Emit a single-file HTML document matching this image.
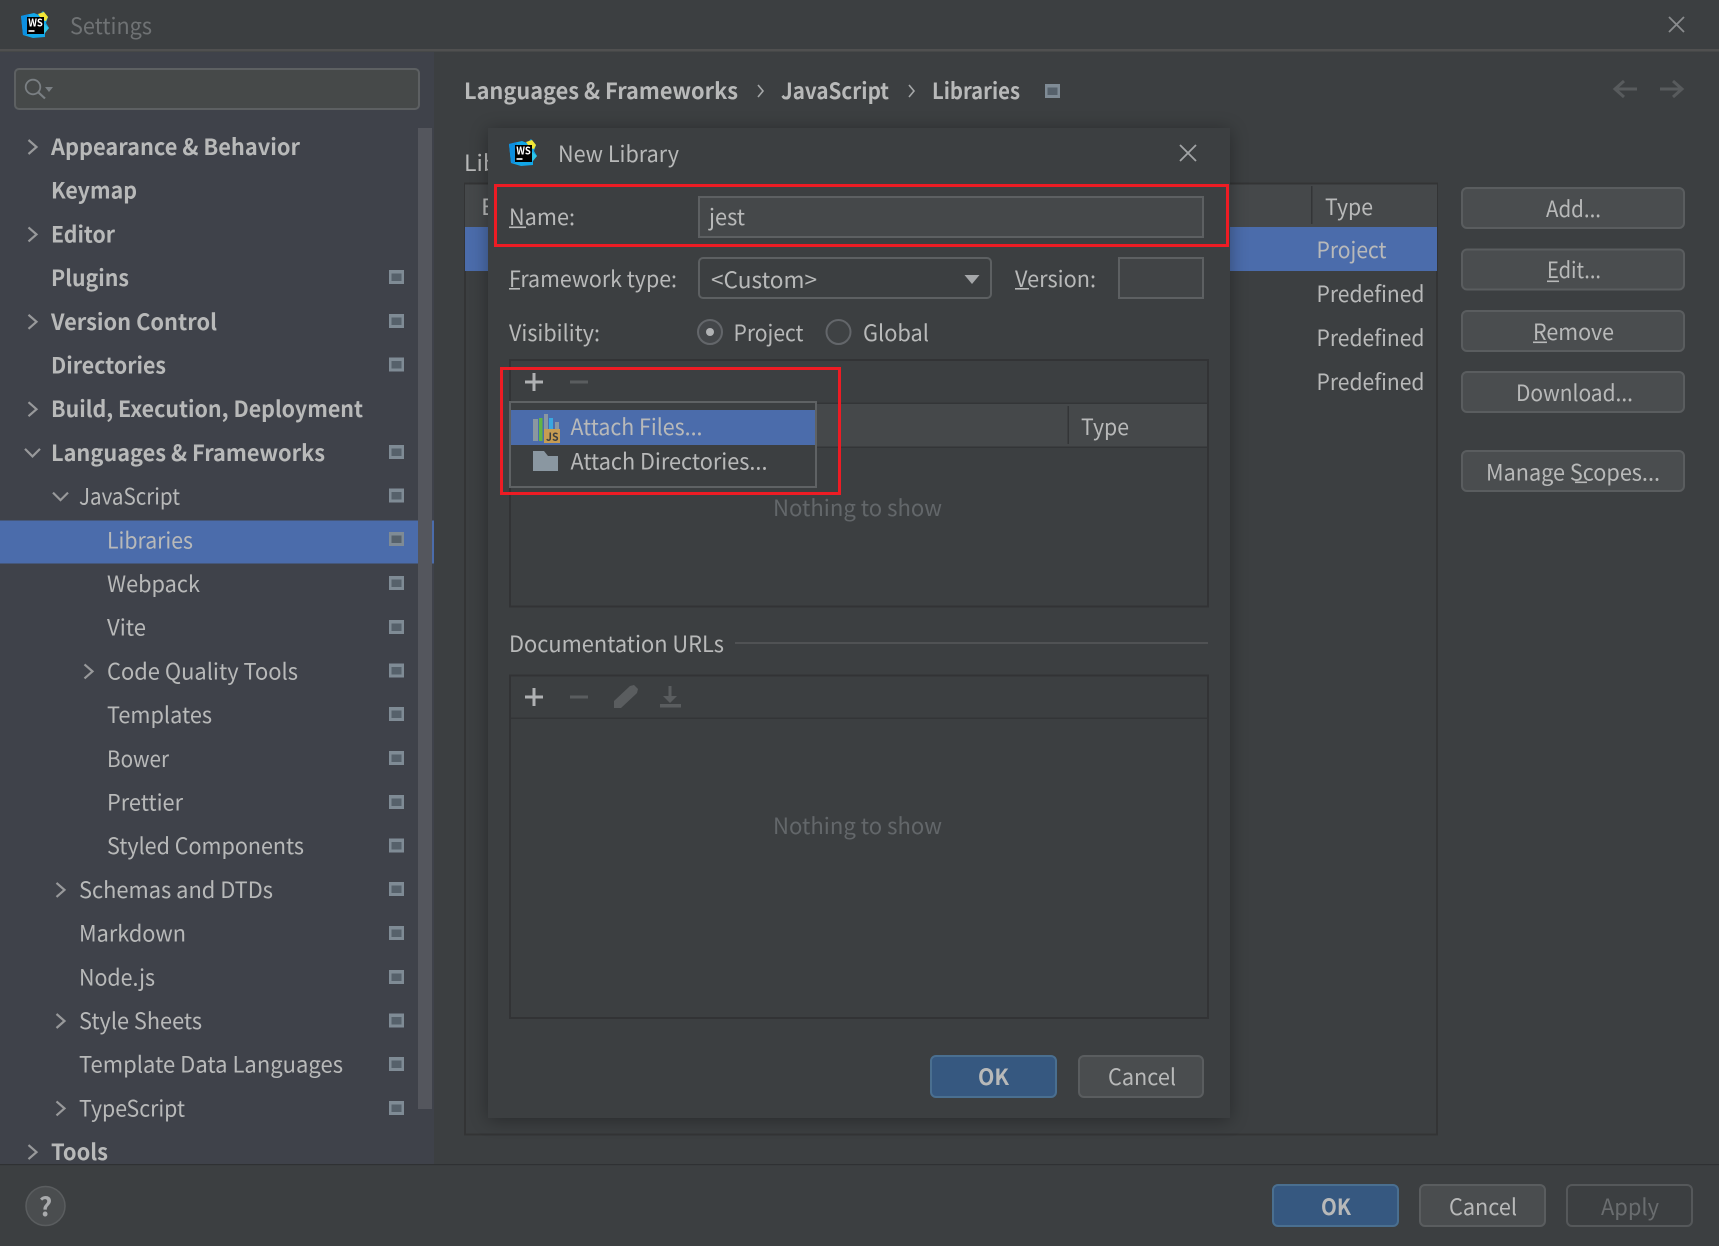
<!DOCTYPE html>
<html lang="en">
<head>
<meta charset="utf-8">
<title>Settings</title>
<style>
html,body{margin:0;padding:0;background:#3c3f41;width:1719px;height:1246px;overflow:hidden}
svg{display:block}
text{font-family:"Noto Sans CJK SC","Liberation Sans",sans-serif;font-size:22.5px;fill:#b8b9b9;white-space:pre;transform:translateY(1px)}
.b{font-weight:700}
.dim{fill:#63676a}
.title{fill:#6f7274}
</style>
</head>
<body>
<svg width="1719" height="1246" viewBox="0 0 1719 1246" xmlns="http://www.w3.org/2000/svg">
<defs>
<filter id="sh" x="-10%" y="-10%" width="120%" height="120%"><feGaussianBlur stdDeviation="9"/></filter>
<g id="ic"><rect x="0" y="0" width="15" height="14" fill="#7f8b95"/><rect x="2.5" y="3.5" width="10" height="7.5" fill="#56616b"/></g>
<polyline id="ar" points="0,-7 8,0 0,7" fill="none" stroke="#98999b" stroke-width="2.2"/>
<polyline id="dn" points="-7.5,-4 0,3.5 7.5,-4" fill="none" stroke="#98999b" stroke-width="2.2"/>
<g id="logo">
<polygon points="0,5 13,2 18,4 22,0 27,6 25,12 28,17 24,21 24,26 12,27 2,24" fill="#12a7e8"/>
<polygon points="0,5 8,3 6,24 2,24" fill="#0d8fe0"/>
<polygon points="17,3 23,1 27,6 25,10 21,9" fill="#f2e635"/>
<polygon points="22,12 28,17 24,22 22,20" fill="#2fc6e8"/>
<rect x="6" y="6" width="17" height="17" fill="#000"/>
<text x="7.2" y="14.4" textLength="14.6" lengthAdjust="spacingAndGlyphs" style="font-size:10.5px;font-weight:700;fill:#fff">WS</text>
<rect x="7.5" y="19.2" width="6" height="1.6" fill="#fff"/>
</g>
</defs>

<!-- base -->
<rect width="1719" height="1246" fill="#3c3f41"/>
<rect x="0" y="49" width="1719" height="2.5" fill="#505050"/>
<rect x="0" y="52" width="434" height="1112" fill="#3f424a"/>
<rect x="0" y="1164" width="1719" height="1.2" fill="#2f3133"/>

<!-- title bar -->
<use href="#logo" x="21" y="11"/>
<text class="title" x="70" y="33" textLength="82" lengthAdjust="spacingAndGlyphs">Settings</text>
<path d="M1669 17L1684 32M1684 17L1669 32" stroke="#8a8c8e" stroke-width="1.8" fill="none"/>

<!-- search -->
<rect x="15" y="69" width="404" height="40" rx="4" fill="#464949" stroke="#5d6062" stroke-width="2"/>
<circle cx="33" cy="87" r="7.3" fill="none" stroke="#7a7f83" stroke-width="1.8"/>
<path d="M38.5 92.5L45 98.5" stroke="#7a7f83" stroke-width="2.2"/>
<polygon points="45,87 53,87 49,92" fill="#7a7f83"/>

<!-- sidebar selection & scrollbar -->
<rect x="0" y="520.5" width="434" height="43" fill="#4b6cab"/>
<rect x="418" y="128" width="14" height="981" fill="#54565d"/>

<!-- tree -->
<g>
<use href="#ar" x="28.5" y="147"/><text class="b" x="51" y="154" textLength="249" lengthAdjust="spacingAndGlyphs">Appearance &amp; Behavior</text>
<text class="b" x="51" y="197.7" textLength="86" lengthAdjust="spacingAndGlyphs">Keymap</text>
<use href="#ar" x="28.5" y="234.4"/><text class="b" x="51" y="241.4" textLength="64" lengthAdjust="spacingAndGlyphs">Editor</text>
<text class="b" x="51" y="285.1" textLength="78" lengthAdjust="spacingAndGlyphs">Plugins</text>
<use href="#ar" x="28.5" y="321.8"/><text class="b" x="51" y="328.8" textLength="166" lengthAdjust="spacingAndGlyphs">Version Control</text>
<text class="b" x="51" y="372.5" textLength="115" lengthAdjust="spacingAndGlyphs">Directories</text>
<use href="#ar" x="28.5" y="409.2"/><text class="b" x="51" y="416.2" textLength="312" lengthAdjust="spacingAndGlyphs">Build, Execution, Deployment</text>
<use href="#dn" x="32.5" y="452.9"/><text class="b" x="51" y="459.9" textLength="274" lengthAdjust="spacingAndGlyphs">Languages &amp; Frameworks</text>
<use href="#dn" x="60.5" y="496.6"/><text x="79" y="503.6" textLength="101" lengthAdjust="spacingAndGlyphs">JavaScript</text>
<text x="107" y="547.3" textLength="86" lengthAdjust="spacingAndGlyphs">Libraries</text>
<text x="107" y="591" textLength="93" lengthAdjust="spacingAndGlyphs">Webpack</text>
<text x="107" y="634.7" textLength="39" lengthAdjust="spacingAndGlyphs">Vite</text>
<use href="#ar" x="84.5" y="671.4"/><text x="107" y="678.4" textLength="191" lengthAdjust="spacingAndGlyphs">Code Quality Tools</text>
<text x="107" y="722.1" textLength="105" lengthAdjust="spacingAndGlyphs">Templates</text>
<text x="107" y="765.8" textLength="62" lengthAdjust="spacingAndGlyphs">Bower</text>
<text x="107" y="809.5" textLength="76" lengthAdjust="spacingAndGlyphs">Prettier</text>
<text x="107" y="853.2" textLength="197" lengthAdjust="spacingAndGlyphs">Styled Components</text>
<use href="#ar" x="56.5" y="889.9"/><text x="79" y="896.9" textLength="194" lengthAdjust="spacingAndGlyphs">Schemas and DTDs</text>
<text x="79" y="940.6" textLength="107" lengthAdjust="spacingAndGlyphs">Markdown</text>
<text x="79" y="984.3" textLength="76" lengthAdjust="spacingAndGlyphs">Node.js</text>
<use href="#ar" x="56.5" y="1021"/><text x="79" y="1028" textLength="123" lengthAdjust="spacingAndGlyphs">Style Sheets</text>
<text x="79" y="1071.7" textLength="264" lengthAdjust="spacingAndGlyphs">Template Data Languages</text>
<use href="#ar" x="56.5" y="1108.4"/><text x="79" y="1115.4" textLength="106" lengthAdjust="spacingAndGlyphs">TypeScript</text>
<use href="#ar" x="28.5" y="1152.1"/><text class="b" x="51" y="1159.1" textLength="57" lengthAdjust="spacingAndGlyphs">Tools</text>
</g>

<!-- tree row icons -->
<use href="#ic" x="389" y="270"/><use href="#ic" x="389" y="314"/><use href="#ic" x="389" y="357.5"/>
<use href="#ic" x="389" y="445"/><use href="#ic" x="389" y="488.5"/><use href="#ic" x="389" y="532"/>
<use href="#ic" x="389" y="576"/><use href="#ic" x="389" y="620"/><use href="#ic" x="389" y="663.5"/>
<use href="#ic" x="389" y="707"/><use href="#ic" x="389" y="751"/><use href="#ic" x="389" y="795"/>
<use href="#ic" x="389" y="838.5"/><use href="#ic" x="389" y="882"/><use href="#ic" x="389" y="926"/>
<use href="#ic" x="389" y="970"/><use href="#ic" x="389" y="1013.5"/><use href="#ic" x="389" y="1057"/>
<use href="#ic" x="389" y="1101"/>

<!-- breadcrumb -->
<text class="b" x="464" y="98" textLength="274" lengthAdjust="spacingAndGlyphs">Languages &amp; Frameworks</text>
<path d="M758 85L763 91L758 97" fill="none" stroke="#a5a7a8" stroke-width="1.6"/>
<text class="b" x="781" y="98" textLength="108" lengthAdjust="spacingAndGlyphs">JavaScript</text>
<path d="M909 85L914 91L909 97" fill="none" stroke="#a5a7a8" stroke-width="1.6"/>
<text class="b" x="932" y="98" textLength="88" lengthAdjust="spacingAndGlyphs">Libraries</text>
<use href="#ic" x="1045" y="84"/>
<path d="M1637 89H1616M1624 81L1615 89L1624 97" fill="none" stroke="#585b5d" stroke-width="3"/>
<path d="M1660 89H1681M1673 81L1682 89L1673 97" fill="none" stroke="#585b5d" stroke-width="3"/>

<!-- right table -->
<text x="464" y="170" textLength="42" lengthAdjust="spacingAndGlyphs">Libr</text>
<rect x="465" y="183.5" width="972" height="951" fill="#3c3f41" stroke="#333435" stroke-width="2"/>
<rect x="465" y="184.5" width="972" height="42.5" fill="#45484a"/>
<rect x="465" y="227" width="972" height="44" fill="#4b6cab"/>
<rect x="1311" y="186" width="1.5" height="38" fill="#333537"/>
<text x="481" y="214" textLength="14" lengthAdjust="spacingAndGlyphs">E</text>
<text x="1325" y="214" textLength="48" lengthAdjust="spacingAndGlyphs">Type</text>
<text x="1316.5" y="257" textLength="70" lengthAdjust="spacingAndGlyphs">Project</text>
<text x="1316.5" y="301" textLength="108" lengthAdjust="spacingAndGlyphs">Predefined</text>
<text x="1316.5" y="345" textLength="108" lengthAdjust="spacingAndGlyphs">Predefined</text>
<text x="1316.5" y="389" textLength="108" lengthAdjust="spacingAndGlyphs">Predefined</text>

<!-- right buttons -->
<g fill="#4a4d4f" stroke="#5a5d5f" stroke-width="2">
<rect x="1462" y="188" width="222" height="40" rx="5"/>
<rect x="1462" y="249.5" width="222" height="40" rx="5"/>
<rect x="1462" y="311" width="222" height="40" rx="5"/>
<rect x="1462" y="372" width="222" height="40" rx="5"/>
<rect x="1462" y="451" width="222" height="40" rx="5"/>
</g>
<text x="1546" y="216" textLength="55" lengthAdjust="spacingAndGlyphs">Add...</text>
<text x="1547" y="277" textLength="54" lengthAdjust="spacingAndGlyphs">Edit...</text>
<rect x="1547" y="280.5" width="12" height="1.6" fill="#b8b9b9"/>
<text x="1533" y="339" textLength="81" lengthAdjust="spacingAndGlyphs">Remove</text>
<rect x="1533" y="341.5" width="14" height="1.6" fill="#b8b9b9"/>
<text x="1516" y="400" textLength="117" lengthAdjust="spacingAndGlyphs">Download...</text>
<text x="1486" y="479.5" textLength="174" lengthAdjust="spacingAndGlyphs">Manage Scopes...</text>
<rect x="1575" y="481.5" width="12" height="1.6" fill="#b8b9b9"/>

<!-- bottom bar -->
<circle cx="45.5" cy="1206" r="19.5" fill="#4a4d4f" stroke="#5a5d5f" stroke-width="1.5"/>
<text class="b" x="45.5" y="1215" text-anchor="middle" style="font-size:26px;fill:#a9abad">?</text>
<rect x="1273" y="1185" width="125" height="41" rx="5" fill="#365880" stroke="#4a6f90" stroke-width="2"/>
<text class="b" x="1321" y="1214" textLength="30" lengthAdjust="spacingAndGlyphs">OK</text>
<rect x="1420" y="1185" width="125" height="41" rx="5" fill="#4a4d4f" stroke="#5a5d5f" stroke-width="2"/>
<text x="1449" y="1214" textLength="68" lengthAdjust="spacingAndGlyphs">Cancel</text>
<rect x="1567" y="1185" width="125" height="41" rx="5" fill="#3c3f41" stroke="#55585a" stroke-width="2"/>
<text x="1601" y="1214" textLength="58" lengthAdjust="spacingAndGlyphs" style="fill:#6a6d6f">Apply</text>

<!-- dialog -->
<rect x="488" y="130" width="742" height="990" fill="#000" opacity=".33" filter="url(#sh)"/>
<rect x="488" y="128" width="742" height="990" fill="#3c3f41"/>
<use href="#logo" x="509" y="139"/>
<text x="558" y="161" textLength="121" lengthAdjust="spacingAndGlyphs">New Library</text>
<path d="M1180 145L1196 161M1196 145L1180 161" stroke="#a2a4a6" stroke-width="1.8" fill="none"/>

<text x="509" y="224" textLength="66" lengthAdjust="spacingAndGlyphs">Name:</text>
<rect x="509" y="226.5" width="17" height="1.6" fill="#b8b9b9"/>
<rect x="699" y="197" width="504" height="40" fill="#45484a" stroke="#5d6062" stroke-width="2"/>
<text x="709" y="224" textLength="36" lengthAdjust="spacingAndGlyphs">jest</text>

<text x="509" y="286" textLength="168" lengthAdjust="spacingAndGlyphs">Framework type:</text>
<rect x="509" y="288" width="11" height="1.6" fill="#b8b9b9"/>
<rect x="699" y="258" width="292" height="40" rx="4" fill="#3c3f41" stroke="#5d6062" stroke-width="2"/>
<text x="711" y="287" textLength="106" lengthAdjust="spacingAndGlyphs">&lt;Custom&gt;</text>
<polygon points="964.5,275 979.5,275 972,284" fill="#a5a7a9"/>
<text x="1015" y="286" textLength="81" lengthAdjust="spacingAndGlyphs">Version:</text>
<rect x="1015" y="288" width="14" height="1.6" fill="#b8b9b9"/>
<rect x="1119" y="258" width="84" height="40" fill="#414446" stroke="#5d6062" stroke-width="2"/>

<text x="509" y="340" textLength="91" lengthAdjust="spacingAndGlyphs">Visibility:</text>
<circle cx="710" cy="332" r="12" fill="#44474a" stroke="#63666a" stroke-width="2"/>
<circle cx="710" cy="332" r="4" fill="#b0b2b4"/>
<text x="733.5" y="340" textLength="70" lengthAdjust="spacingAndGlyphs">Project</text>
<circle cx="838.5" cy="332" r="12" fill="#3f4244" stroke="#63666a" stroke-width="2"/>
<text x="863" y="340" textLength="66" lengthAdjust="spacingAndGlyphs">Global</text>

<!-- classes table -->
<rect x="510" y="360" width="698" height="246.5" fill="#3c3f41" stroke="#323335" stroke-width="2"/>
<rect x="511" y="403" width="696" height="44" fill="#45484a"/>
<rect x="511" y="402.5" width="696" height="1.5" fill="#333537"/>
<rect x="511" y="446.5" width="696" height="1.5" fill="#333537"/>
<rect x="1067.5" y="406" width="1.5" height="38" fill="#333537"/>
<text x="1081" y="434" textLength="48" lengthAdjust="spacingAndGlyphs">Type</text>
<path d="M525 382H543M534 373V391" stroke="#afb1b3" stroke-width="3"/>
<path d="M570 382H588" stroke="#5a5d5f" stroke-width="3"/>
<text x="773" y="515" textLength="169" lengthAdjust="spacingAndGlyphs" class="dim">Nothing to show</text>

<!-- popup -->
<rect x="510" y="402" width="306" height="85" fill="#3c3f41" stroke="#5f6264" stroke-width="2"/>
<rect x="511" y="410" width="304" height="35" fill="#4b6cab"/>
<g>
<rect x="533" y="419" width="5" height="22" fill="#8a97a1"/>
<rect x="539" y="418" width="3.5" height="23" fill="#62b543"/>
<rect x="544" y="414" width="4" height="27" fill="#8a97a1"/>
<rect x="549" y="418" width="4" height="12" fill="#3aa7e0"/>
<rect x="555" y="422" width="4" height="8" fill="#8a97a1"/>
<rect x="544" y="429" width="16" height="14" fill="#c69c52"/>
<text x="546" y="440" textLength="12.5" lengthAdjust="spacingAndGlyphs" style="font-size:11.5px;font-weight:700;fill:#3c3f41">JS</text>
</g>
<text x="570.5" y="434" textLength="132" lengthAdjust="spacingAndGlyphs">Attach Files...</text>
<polygon points="533,451 544,451 548,456 558,456 558,471 533,471" fill="#8a97a1"/>
<text x="570.5" y="468.5" textLength="197" lengthAdjust="spacingAndGlyphs">Attach Directories...</text>

<!-- documentation -->
<text x="509" y="651" textLength="215" lengthAdjust="spacingAndGlyphs">Documentation URLs</text>
<rect x="735" y="642" width="473" height="2" fill="#505254"/>
<rect x="510" y="675.5" width="698" height="342.5" fill="#3c3f41" stroke="#323335" stroke-width="2"/>
<rect x="511" y="717.5" width="696" height="1.5" fill="#333537"/>
<path d="M525 697H543M534 688V706" stroke="#afb1b3" stroke-width="3"/>
<path d="M570 697H588" stroke="#5a5d5f" stroke-width="3"/>
<path d="M614 708L614 701L630 686L634 685L638 689L637 693L621 708Z" fill="#5a5d5f"/>
<path d="M670 686V699" stroke="#5a5d5f" stroke-width="3"/>
<polygon points="663,696 677,696 670,703" fill="#5a5d5f"/>
<rect x="660" y="704" width="21" height="3.5" fill="#5a5d5f"/>
<text x="773" y="833" textLength="169" lengthAdjust="spacingAndGlyphs" class="dim">Nothing to show</text>

<!-- dialog buttons -->
<rect x="931" y="1056" width="125" height="41" rx="5" fill="#365880" stroke="#4a6f90" stroke-width="2"/>
<text class="b" x="978" y="1084" textLength="31" lengthAdjust="spacingAndGlyphs">OK</text>
<rect x="1079" y="1056" width="124" height="41" rx="5" fill="#4a4d4f" stroke="#5a5d5f" stroke-width="2"/>
<text x="1108" y="1084" textLength="68" lengthAdjust="spacingAndGlyphs">Cancel</text>

<!-- red annotation boxes -->
<rect x="495.5" y="185.5" width="732" height="60" fill="none" stroke="#ed1c24" stroke-width="3"/>
<rect x="501.5" y="368.5" width="338" height="125" fill="none" stroke="#ed1c24" stroke-width="3"/>
</svg>
</body>
</html>
